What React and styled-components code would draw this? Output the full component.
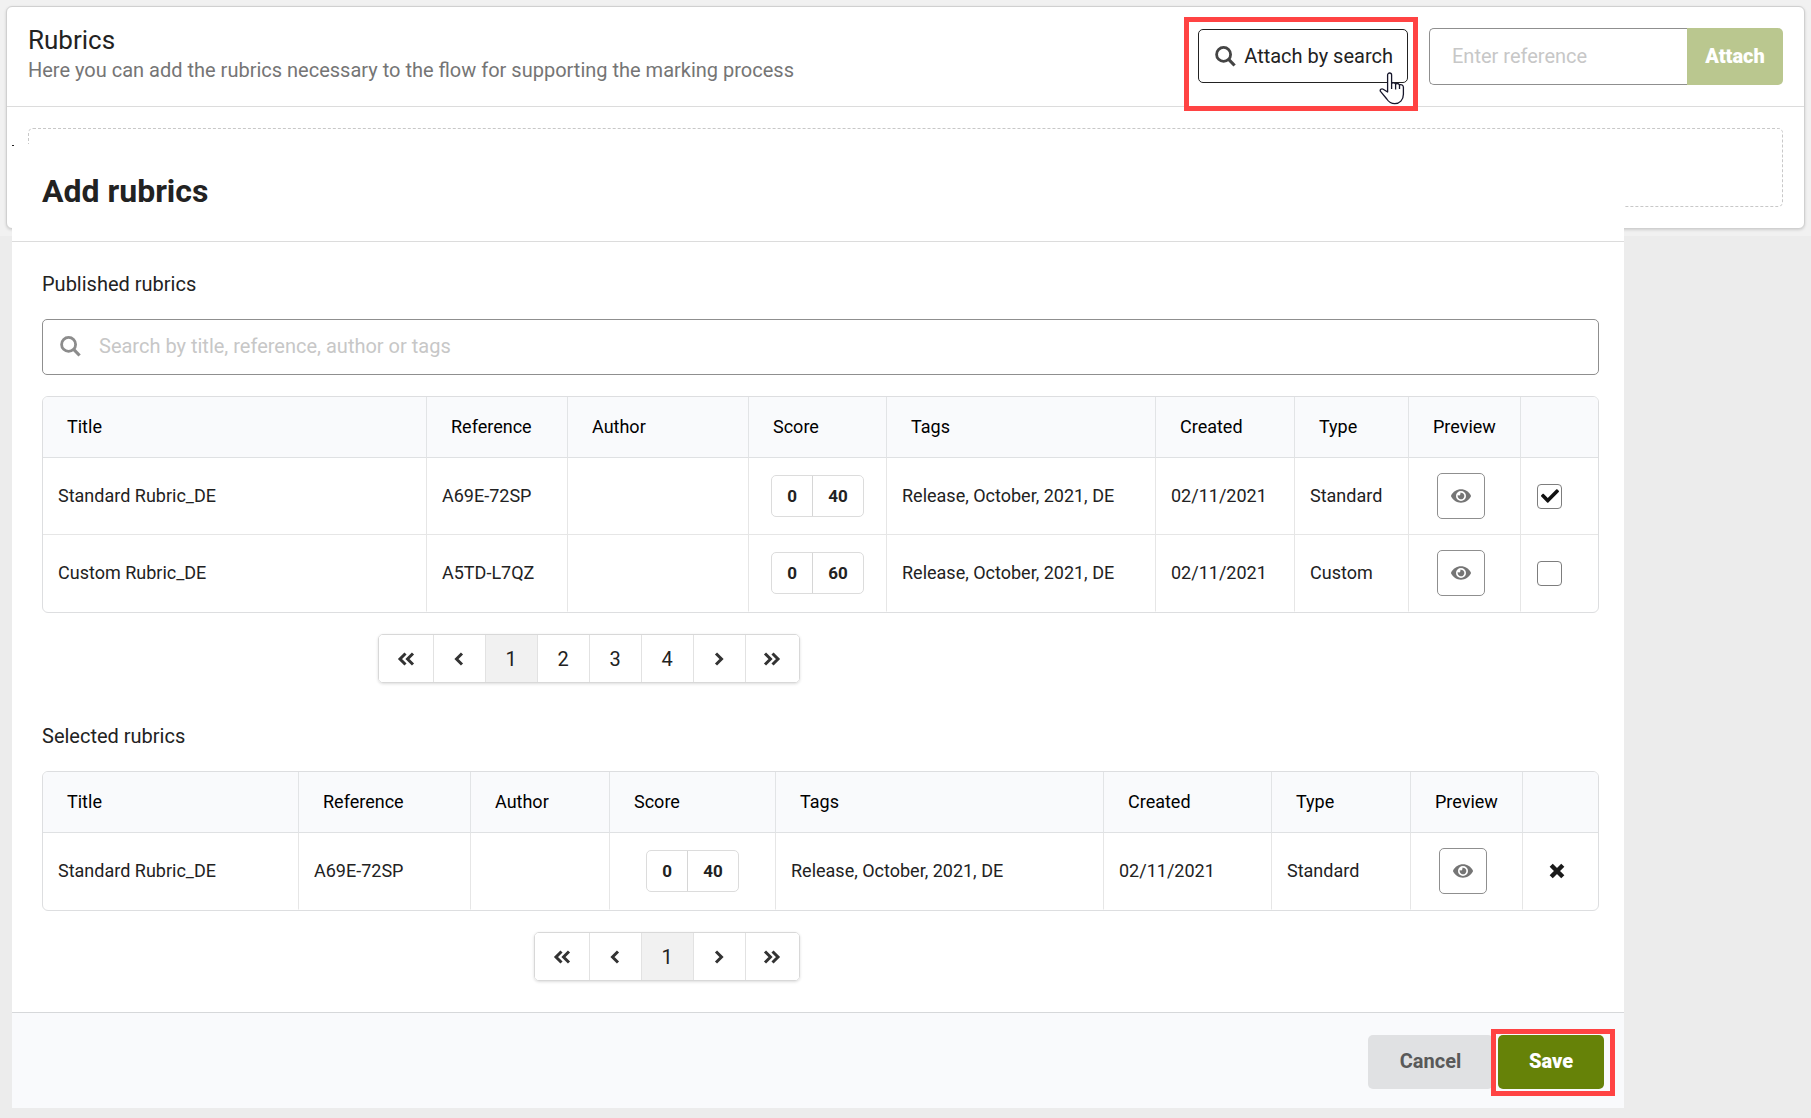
import React from "react";
import styled, { createGlobalStyle, css } from "styled-components";
import { FaCheck, FaEye } from "react-icons/fa";

const GlobalStyle = createGlobalStyle`
  *, *::before, *::after { box-sizing: border-box; }
  body {
    margin: 0;
    background: #ececec;
    color: #222;
    font-family: Roboto, "Open Sans", sans-serif;
    font-size: 20px;
    line-height: 24px;
  }
  button, input { font: inherit; color: inherit; margin: 0; }
  button { cursor: pointer; }
`;

const Page = styled.main`
  display: grid;
  grid-template-columns: minmax(0, 1fr);
  align-items: start;
`;

const Backdrop = styled.div`
  grid-area: 1 / 1;
  padding: 6px 6px 7px;
  background: #f1f1f1;
`;

const Card = styled.section`
  background: #fff;
  border: 1px solid #d0d0d0;
  border-radius: 6px;
  box-shadow: 0 1px 3px rgba(0, 0, 0, 0.15);
`;

const CardHeader = styled.header`
  display: flex;
  justify-content: space-between;
  align-items: flex-end;
  padding: 18px 21px 21px;
  border-bottom: 1px solid #dcdcdc;
`;

const CardTitle = styled.h2`
  margin: 0;
  font-size: 26px;
  line-height: 30px;
  font-weight: 400;
`;

const CardText = styled.p`
  margin: 0;
  line-height: 30px;
  color: #757575;
`;

const CardBody = styled.div`
  padding: 21px;
`;

const DropZone = styled.div`
  height: 79px;
  border: 1px dashed #c8c8c8;
  border-radius: 5px;
`;

const Controls = styled.div`
  display: flex;
  align-items: flex-start;
  gap: 21px;
`;

const Highlight = styled.div`
  position: relative;
  &::after {
    content: "";
    position: absolute;
    inset: ${(p) => p.$inset};
    border: 5px solid #ff4343;
    pointer-events: none;
  }
`;

const SearchButton = styled.button`
  display: flex;
  align-items: center;
  gap: 8px;
  height: 54px;
  margin-top: 1px;
  padding: 0 14px 0 16px;
  background: #fff;
  border: 1px solid #222;
  border-radius: 5px;
`;

const Pointer = styled.svg`
  position: absolute;
  right: 3px;
  bottom: -22px;
  z-index: 1;
`;

const AttachGroup = styled.form`
  display: flex;
  height: 57px;
`;

const placeholder = css`
  &::placeholder { color: #c7c7c7; opacity: 1; }
`;

const ReferenceInput = styled.input`
  width: 258px;
  padding: 0 22px 2px;
  background: #fff;
  border: 1px solid #8f8f8f;
  border-right: 0;
  border-radius: 5px 0 0 5px;
  ${placeholder}
`;

const AttachButton = styled.button`
  width: 96px;
  padding: 0 0 2px;
  border: 0;
  border-radius: 0 5px 5px 0;
  background: #bac78f;
  color: #fff;
  font-weight: 900;
`;

const Dialog = styled.section`
  grid-area: 1 / 1;
  position: relative;
  margin: 144px 187px 10px 12px;
  background: #fff;
  &::before {
    content: "";
    position: absolute;
    top: 1px;
    left: 0;
    width: 2px;
    height: 1px;
    background: #222;
  }
`;

const DialogHeader = styled.header`
  padding: 27px 30px 30px;
  border-bottom: 1px solid #dcdcdc;
`;

const DialogTitle = styled.h1`
  margin: 0;
  font-size: 32px;
  line-height: 40px;
  font-weight: 700;
`;

const DialogBody = styled.div`
  display: flex;
  flex-direction: column;
  gap: 40px;
  padding: 29px 25px 31px 30px;
`;

const Section = styled.section`
  display: flex;
  flex-direction: column;
  gap: 21px;
`;

const SectionTitle = styled.h2`
  margin: 0;
  padding-bottom: 1px;
  font-size: 20px;
  line-height: 26px;
  font-weight: 400;
`;

const SearchField = styled.label`
  display: flex;
  align-items: center;
  gap: 18px;
  height: 56px;
  padding: 0 17px 2px;
  border: 1px solid #8f8f8f;
  border-radius: 5px;
  color: #8c8c8c;
`;

const SearchInput = styled.input`
  flex: 1;
  min-width: 0;
  padding: 0;
  border: 0;
  outline: 0;
  background: transparent;
  ${placeholder}
`;

const TableFrame = styled.div`
  border: 1px solid #dddee0;
  border-radius: 6px;
  overflow: hidden;
`;

const Table = styled.table`
  width: 100%;
  table-layout: fixed;
  border-collapse: separate;
  border-spacing: 0;
  font-size: 18px;
`;

const Col = styled.col`
  width: ${(p) => p.$width}px;
`;

const Th = styled.th`
  height: 61px;
  padding: 0 0 0 24px;
  background: #f9fafc;
  border-bottom: 1px solid #dfe1e3;
  color: #000;
  font-weight: 400;
  text-align: left;
  & + & { border-left: 1px solid #e2e4e6; }
`;

const cellPadding = { text: "0 0 0 15px", action: "0 0 0 16px", preview: "0 0 0 28px", score: "0" };

const Td = styled.td`
  height: 77px;
  padding: ${(p) => cellPadding[p.$kind || "text"]};
  text-align: ${(p) => (p.$kind === "score" ? "center" : "left")};
  border-bottom: 1px solid #e6e6e6;
  & + & { border-left: 1px solid #e6e6e6; }
  tr:last-child > & { border-bottom-color: transparent; }
`;

const Score = styled.span`
  display: inline-flex;
  vertical-align: middle;
  height: 42px;
  border: 1px solid #dcdcdc;
  border-radius: 5px;
  font-size: 17px;
  line-height: 40px;
  font-weight: 700;
`;

const ScoreValue = styled.span`
  padding: 0 15px;
  & + & { border-left: 1px solid #d6d6d6; }
`;

const PreviewButton = styled.button`
  display: inline-flex;
  align-items: center;
  justify-content: center;
  vertical-align: middle;
  width: 48px;
  height: 46px;
  padding: 0;
  background: #fff;
  border: 1px solid #8f8f8f;
  border-radius: 5px;
  color: #757575;
`;

const RemoveButton = styled.button`
  display: grid;
  place-items: center;
  width: 36px;
  height: 36px;
  padding: 0;
  border: 0;
  background: transparent;
`;

const CheckMark = styled.span`
  display: inline-grid;
  place-items: center;
  vertical-align: middle;
  color: #111;
  & > * { grid-area: 1 / 1; }
  & > svg { pointer-events: none; visibility: hidden; }
  & > input:checked + svg { visibility: visible; }
`;

const CheckInput = styled.input`
  appearance: none;
  width: 25px;
  height: 25px;
  background: #fff;
  border: 1px solid #7d7d7d;
  border-radius: 4px;
`;

const PagerRow = styled.div`
  display: grid;
  grid-template-columns: 1fr 1fr;
  column-gap: 42px;
`;

const Pager = styled.nav`
  display: flex;
  justify-self: end;
  height: 49px;
  border: 1px solid #d8d8d8;
  border-radius: 5px;
  overflow: hidden;
  box-shadow: 0 1px 3px rgba(0, 0, 0, 0.14);
`;

const PagerButton = styled.button`
  display: grid;
  place-items: center;
  width: 52px;
  padding: 0;
  border: 0;
  background: ${(p) => (p.$active ? "#f1f1f1" : "#fff")};
  & + & { border-left: 1px solid #e2e2e2; }
  &:first-child, &:last-child { width: 54px; }
`;

const DialogFooter = styled.footer`
  display: flex;
  justify-content: flex-end;
  gap: 5px;
  padding: 22px 20px 19px;
  background: #f9fafc;
  border-top: 1px solid #d6d8da;
`;

const ActionButton = styled.button`
  width: ${(p) => (p.$primary ? 106 : 125)}px;
  height: 54px;
  padding: 0 0 2px;
  border: 0;
  border-radius: 5px;
  background: ${(p) => (p.$primary ? "#668208" : "#e0e1e3")};
  color: ${(p) => (p.$primary ? "#fff" : "#595959")};
  font-weight: ${(p) => (p.$primary ? 900 : 700)};
`;

const SearchIcon = ({ color = "currentColor" }) => (
  <svg width="21" height="21" viewBox="0 0 21 21" fill="none" stroke={color} aria-hidden="true">
    <circle cx="8.6" cy="8.4" r="7" strokeWidth="2.800" />
    <path d="M13.400 13.200l6.200 6.300" strokeWidth="3.200" />
  </svg>
);

const CrossIcon = () => (
  <svg width="16" height="16" viewBox="0 0 16 16" stroke="#1a1a1a" strokeWidth="4.4" aria-hidden="true">
    <path d="M2.2 2.2l11.6 11.6M13.8 2.2L2.2 13.8" />
  </svg>
);

const chevrons = {
  first: ["M8.5 1.5L3 7l5.5 5.5", "M16 1.5L10.5 7l5.5 5.5"],
  prev: ["M12 1.5L6.5 7l5.5 5.5"],
  next: ["M6 1.5L11.5 7 6 12.5"],
  last: ["M2 1.5L7.5 7 2 12.5", "M9.5 1.5L15 7l-5.5 5.5"],
};

const Chevron = ({ kind }) => (
  <svg width="18" height="14" viewBox="0 0 18 14" fill="none" stroke="#333" strokeWidth="3" aria-hidden="true">
    {chevrons[kind].map((d) => <path key={d} d={d} />)}
  </svg>
);

const HandPointer = () => (
  <Pointer width="26" height="33" viewBox="0 0 26 33" fill="#fff" stroke="#15152a" strokeWidth="1.3" strokeLinejoin="round" aria-hidden="true">
    <path d="M8.6 20V3a2 2 0 0 1 4 0v8.3c1.6-1 3.3-.6 4 .7 1.5-.8 3.2-.4 3.9.8 2-.6 3.9.3 3.9 2.5v7c0 5.7-3.8 9.4-8.6 9.4-3.9 0-6.1-1.7-8-4.7L1.5 19.400c-1-1.700 1-3.100 2.700-2.200z" />
    <path d="M12.6 11v6M16.6 12v5.5M20.5 12.8V17" fill="none" />
  </Pointer>
);

const headings = ["Title", "Reference", "Author", "Score", "Tags", "Created", "Type", "Preview"];

const published = [
  { title: "Standard Rubric_DE", reference: "A69E-72SP", max: 40, type: "Standard", checked: true },
  { title: "Custom Rubric_DE", reference: "A5TD-L7QZ", max: 60, type: "Custom", checked: false },
];

function RubricTable({ label, widths, rows, renderAction }) {
  return (
    <TableFrame>
      <Table aria-label={label}>
        <colgroup>
          {widths.map((w, i) => <Col key={i} $width={w} />)}
        </colgroup>
        <thead>
          <tr>
            {headings.map((h) => <Th key={h} scope="col">{h}</Th>)}
            <Th />
          </tr>
        </thead>
        <tbody>
          {rows.map((row) => (
            <tr key={row.reference}>
              <Td>{row.title}</Td>
              <Td>{row.reference}</Td>
              <Td />
              <Td $kind="score">
                <Score>
                  <ScoreValue>0</ScoreValue>
                  <ScoreValue>{row.max}</ScoreValue>
                </Score>
              </Td>
              <Td>Release, October, 2021, DE</Td>
              <Td>02/11/2021</Td>
              <Td>{row.type}</Td>
              <Td $kind="preview">
                <PreviewButton type="button" aria-label={`Preview ${row.title}`}>
                  <FaEye size={20} />
                </PreviewButton>
              </Td>
              <Td $kind="action">{renderAction(row)}</Td>
            </tr>
          ))}
        </tbody>
      </Table>
    </TableFrame>
  );
}

function Pagination({ label, pages }) {
  return (
    <PagerRow>
      <Pager aria-label={label}>
        <PagerButton type="button" aria-label="First page"><Chevron kind="first" /></PagerButton>
        <PagerButton type="button" aria-label="Previous page"><Chevron kind="prev" /></PagerButton>
        {pages.map((n) => (
          <PagerButton type="button" key={n} $active={n === 1}>{n}</PagerButton>
        ))}
        <PagerButton type="button" aria-label="Next page"><Chevron kind="next" /></PagerButton>
        <PagerButton type="button" aria-label="Last page"><Chevron kind="last" /></PagerButton>
      </Pager>
    </PagerRow>
  );
}

export default function App() {
  return (
    <>
      <GlobalStyle />
      <Page>
        <Backdrop>
          <Card>
            <CardHeader>
              <div>
                <CardTitle>Rubrics</CardTitle>
                <CardText>Here you can add the rubrics necessary to the flow for supporting the marking process</CardText>
              </div>
              <Controls>
                <Highlight $inset="-11px -10px -28px -14px">
                  <SearchButton type="button">
                    <SearchIcon color="#444" />
                    Attach by search
                  </SearchButton>
                  <HandPointer />
                </Highlight>
                <AttachGroup onSubmit={(e) => e.preventDefault()}>
                  <ReferenceInput type="text" aria-label="Reference" placeholder="Enter reference" />
                  <AttachButton type="submit">Attach</AttachButton>
                </AttachGroup>
              </Controls>
            </CardHeader>
            <CardBody>
              <DropZone />
            </CardBody>
          </Card>
        </Backdrop>
        <Dialog role="dialog" aria-labelledby="dialog-title">
          <DialogHeader>
            <DialogTitle id="dialog-title">Add rubrics</DialogTitle>
          </DialogHeader>
          <DialogBody>
            <Section>
              <SectionTitle>Published rubrics</SectionTitle>
              <SearchField>
                <SearchIcon />
                <SearchInput type="text" aria-label="Search rubrics" placeholder="Search by title, reference, author or tags" />
              </SearchField>
              <RubricTable
                label="Published rubrics"
                widths={[383, 141, 181, 138, 269, 139, 114, 112, 78]}
                rows={published}
                renderAction={(row) => (
                  <CheckMark>
                    <CheckInput type="checkbox" defaultChecked={row.checked} aria-label={`Select ${row.title}`} />
                    <FaCheck size={18} />
                  </CheckMark>
                )}
              />
              <Pagination label="Published rubrics pages" pages={[1, 2, 3, 4]} />
            </Section>
            <Section>
              <SectionTitle>Selected rubrics</SectionTitle>
              <RubricTable
                label="Selected rubrics"
                widths={[255, 172, 139, 166, 328, 168, 139, 112, 76]}
                rows={published.filter((row) => row.checked)}
                renderAction={(row) => (
                  <RemoveButton type="button" aria-label={`Remove ${row.title}`}>
                    <CrossIcon />
                  </RemoveButton>
                )}
              />
              <Pagination label="Selected rubrics pages" pages={[1]} />
            </Section>
          </DialogBody>
          <DialogFooter>
            <ActionButton type="button">Cancel</ActionButton>
            <Highlight $inset="-6px -11px -7px -7px">
              <ActionButton type="button" $primary>Save</ActionButton>
            </Highlight>
          </DialogFooter>
        </Dialog>
      </Page>
    </>
  );
}
